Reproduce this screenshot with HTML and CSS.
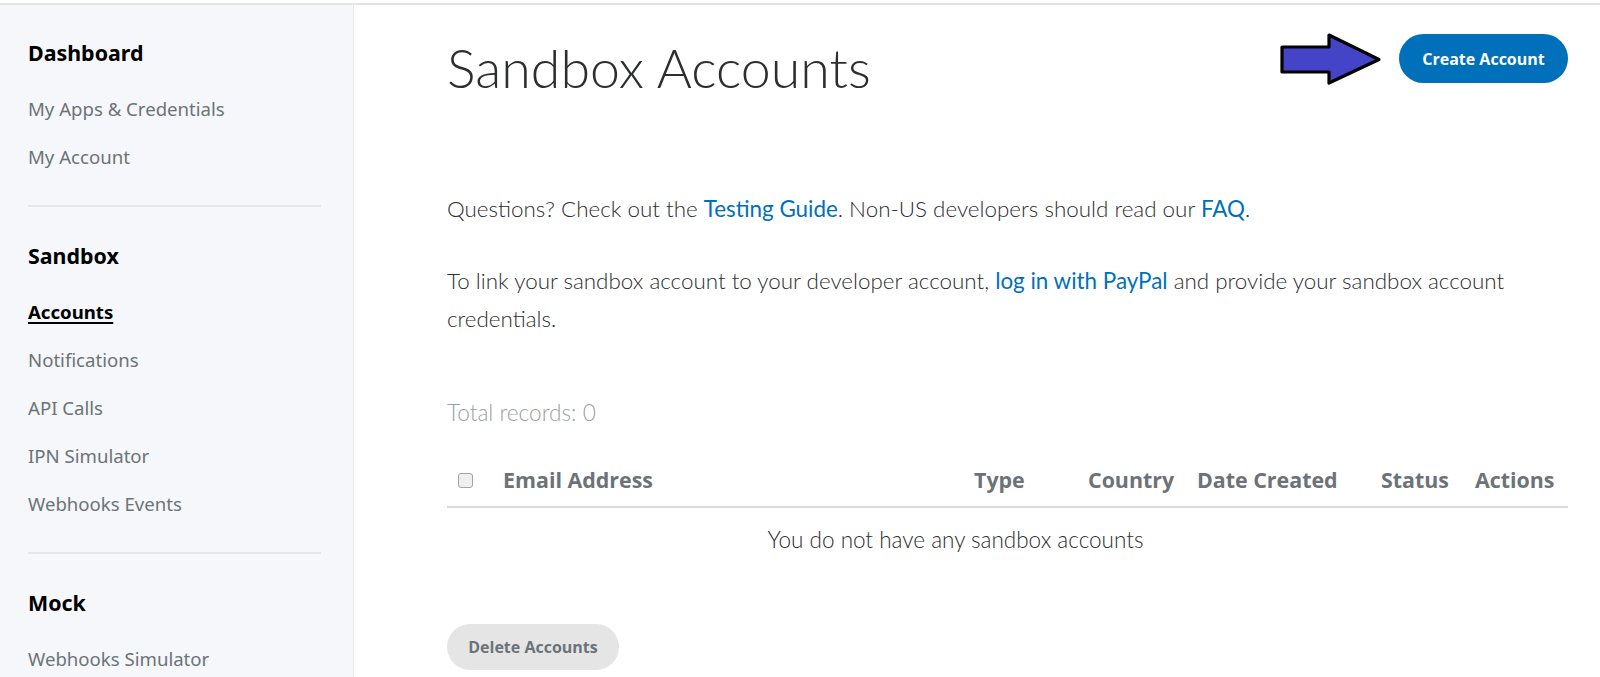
FILE: index.html
```html
<!DOCTYPE html>
<html lang="en">
<head>
<meta charset="utf-8">
<title>Sandbox Accounts</title>
<link rel="stylesheet" href="styles.css">
</head>
<body>
<div class="topbar"></div>
<div class="layout">
  <nav class="sidebar">
    <section class="nav-section">
      <h3 class="nav-heading">Dashboard</h3>
      <a class="nav-link" href="#">My Apps &amp; Credentials</a>
      <a class="nav-link" href="#">My Account</a>
    </section>
    <hr class="nav-divider">
    <section class="nav-section">
      <h3 class="nav-heading">Sandbox</h3>
      <a class="nav-link active" href="#">Accounts</a>
      <a class="nav-link" href="#">Notifications</a>
      <a class="nav-link" href="#">API Calls</a>
      <a class="nav-link" href="#">IPN Simulator</a>
      <a class="nav-link" href="#">Webhooks Events</a>
    </section>
    <hr class="nav-divider">
    <section class="nav-section">
      <h3 class="nav-heading">Mock</h3>
      <a class="nav-link" href="#">Webhooks Simulator</a>
    </section>
  </nav>
  <main class="main">
    <header class="page-header">
      <h1 class="page-title">Sandbox Accounts</h1>
      <svg class="pointer-arrow" width="104" height="54" viewBox="0 0 104 54" aria-hidden="true">
        <polygon points="3,15 50,15 50,3 100,27.5 50,51 50,40 3,40" fill="#4444c9" stroke="#000" stroke-width="3.2" stroke-linejoin="round"/>
      </svg>
      <button class="btn btn-primary">Create Account</button>
    </header>
    <p class="intro intro-first">Questions? Check out the <a href="#">Testing Guide</a>. Non-US developers should read our <a href="#">FAQ</a>.</p>
    <p class="intro"><span>To link your sandbox account to your developer account, </span><a href="#">log in with PayPal</a><span> and provide your sandbox account </span><span>credentials.</span></p>
    <div class="total">Total records: 0</div>
    <div class="table">
      <div class="table-head">
        <div class="cell cell-check"><span class="checkbox"></span></div>
        <div class="cell">Email Address</div>
        <div class="cell">Type</div>
        <div class="cell">Country</div>
        <div class="cell">Date Created</div>
        <div class="cell">Status</div>
        <div class="cell">Actions</div>
      </div>
      <div class="table-empty">You do not have any sandbox accounts</div>
    </div>
    <button class="btn btn-secondary">Delete Accounts</button>
  </main>
</div>
</body>
</html>
```

FILE: styles.css
```css
html, body {
  margin: 0;
  padding: 0;
  overflow: hidden;
  background: #ffffff;
}

body {
  font-family: "Lato", "Liberation Sans", sans-serif;
  color: #2c2e2f;
}

.topbar {
  height: 3px;
  border-bottom: 2px solid #e4e4e4;
  background: #ffffff;
}

.layout {
  display: flex;
  min-height: 672px;
}

.sidebar {
  width: 293px;
  flex: 0 0 293px;
  background: #f5f7fa;
  border-right: 1px solid #e6e9ed;
  padding: 36px 32px 0 28px;
  font-family: "Noto Sans", "Liberation Sans", sans-serif;
}

.nav-section {
  display: flex;
  flex-direction: column;
}

.nav-heading {
  margin: 0 0 20px;
  font-size: 21.4px;
  line-height: 24px;
  font-weight: 700;
  color: #000000;
}

.nav-link {
  display: block;
  padding: 12px 0;
  font-size: 18.6px;
  line-height: 24px;
  color: #6c7378;
  text-decoration: none;
}

.nav-link.active {
  color: #000000;
  font-weight: 700;
  text-decoration: underline;
  text-decoration-thickness: 2px;
  text-underline-offset: 3px;
  align-self: flex-start;
}

.nav-divider {
  margin: 24px 0 37px;
  border: 0;
  height: 2px;
  background: #e6e6e6;
}

.main {
  flex: 1;
  padding: 0 32px 0 93px;
}

.page-header {
  position: relative;
  display: flex;
  justify-content: space-between;
  align-items: flex-start;
  padding-top: 29px;
}

.page-title {
  margin: 2px 0 0;
  font-size: 53.7px;
  line-height: 62px;
  font-weight: 300;
  color: #2c2e2f;
}

.pointer-arrow {
  position: absolute;
  left: 832px;
  top: 27px;
}

.btn {
  border: 0;
  border-radius: 25px;
  font-family: "Open Sans", "Liberation Sans", sans-serif;
  font-weight: 700;
  font-size: 16px;
  cursor: pointer;
}

.btn-primary {
  width: 169px;
  height: 49px;
  background: #0070ba;
  color: #ffffff;
}

.btn-secondary {
  margin-top: 65px;
  width: 172px;
  height: 46px;
  border-radius: 23px;
  background: #e5e5e5;
  color: #6c7378;
}

.intro {
  margin: 34px 0 0;
  font-size: 22.4px;
  line-height: 38px;
  font-weight: 300;
  color: #2c2e2f;
}

.intro-first {
  margin-top: 92px;
}

.intro a {
  color: #0070ba;
  font-weight: 400;
  text-decoration: none;
}

.total {
  margin-top: 60px;
  font-size: 22.6px;
  line-height: 30px;
  font-weight: 300;
  color: #9a9fa3;
}

.table {
  margin-top: 17px;
}

.table-head {
  display: grid;
  grid-template-columns: 46px 1fr 114px 109px 184px 94px 103px;
  border-bottom: 2px solid #dadada;
  padding: 20px 0 11px;
  font-family: "Open Sans", "Liberation Sans", sans-serif;
  font-weight: 700;
  font-size: 21.4px;
  line-height: 30px;
  color: #6c7378;
}

.cell {
  padding-left: 10px;
  white-space: nowrap;
}

.cell-check {
  padding-left: 11px;
  display: flex;
  align-items: center;
}

.checkbox {
  display: block;
  width: 13px;
  height: 13px;
  border: 1px solid #a3a3a3;
  border-radius: 3px;
  background: #efefef;
}

.table-empty {
  padding: 13px 104px 0 0;
  text-align: center;
  font-size: 22.5px;
  line-height: 38px;
  font-weight: 300;
  color: #2c2e2f;
}
```
